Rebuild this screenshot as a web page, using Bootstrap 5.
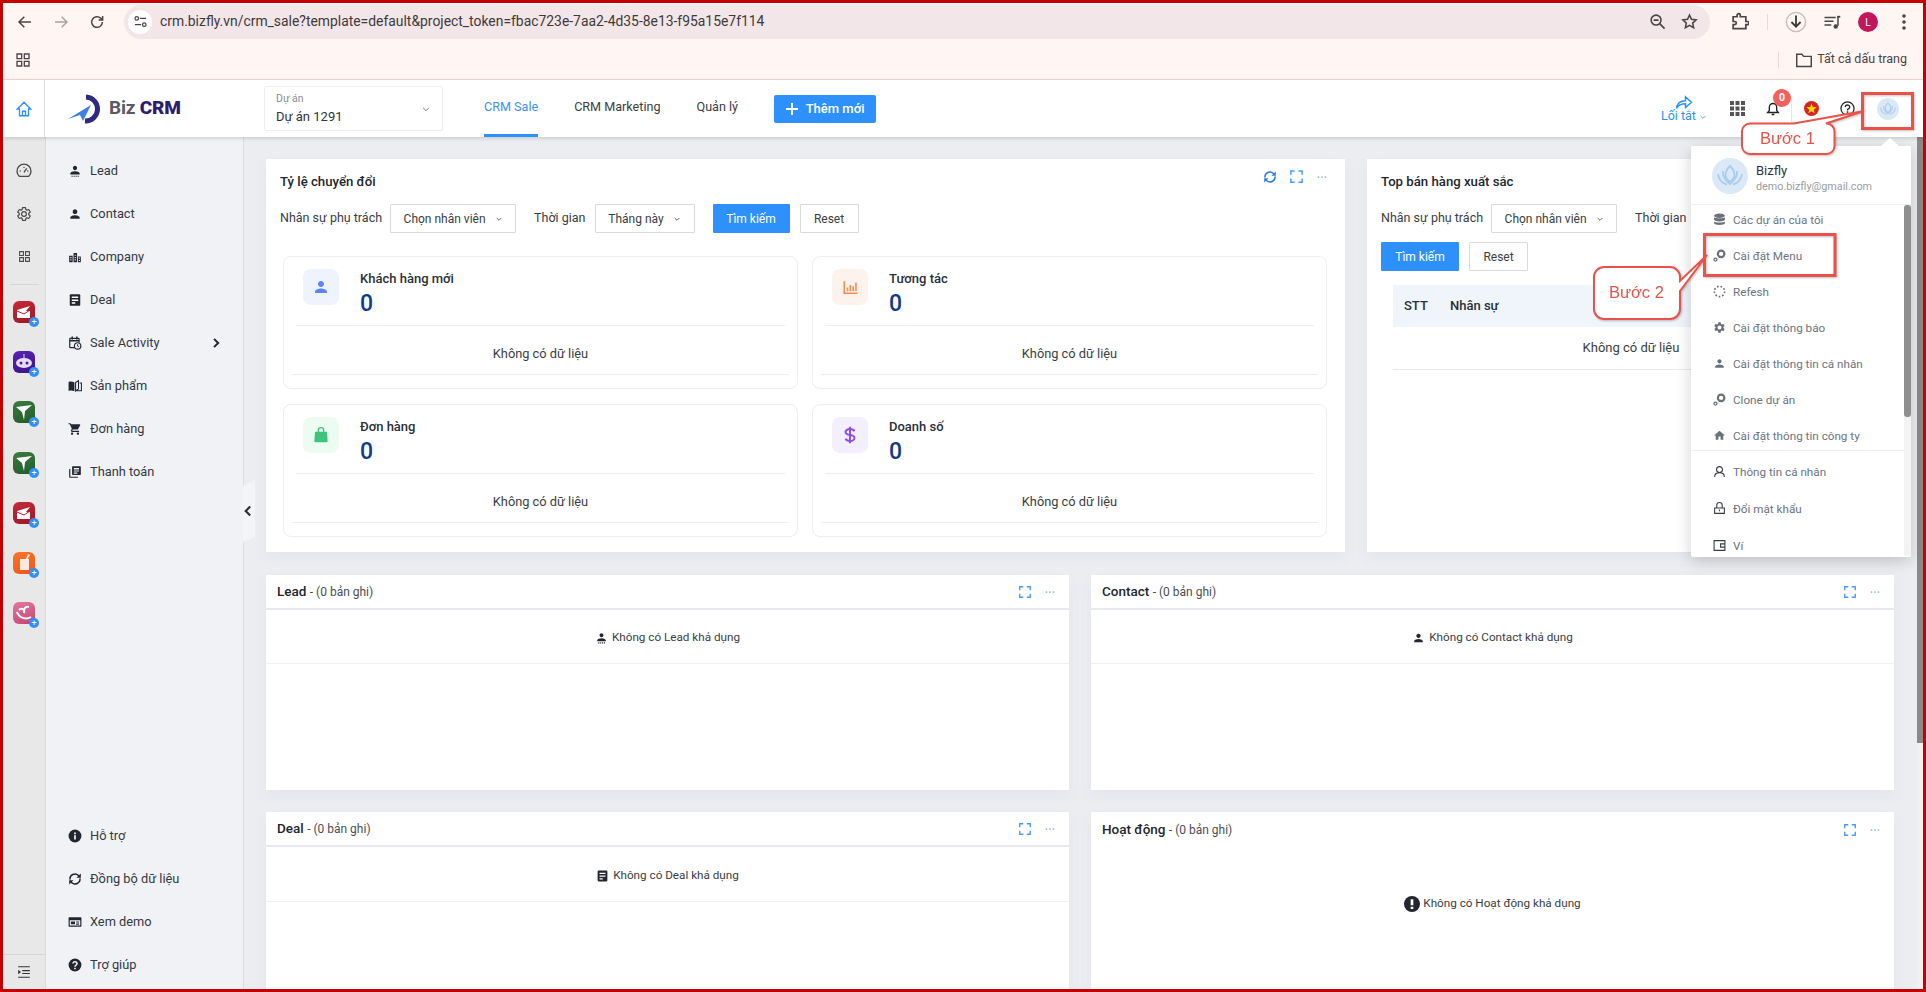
<!DOCTYPE html>
<html lang="vi">
<head>
<meta charset="UTF-8">
<title>CRM Sale</title>
<link href="https://cdn.jsdelivr.net/npm/bootstrap@5.3.0/dist/css/bootstrap.min.css" rel="stylesheet">
<style>
html, body { height: 100%; margin: 0; overflow: hidden; }
body { font-family: Roboto, "Liberation Sans", sans-serif; font-size: 13px; color: #2b2f38; background: #ecedf1; }
.shot { position: relative; width: 1926px; height: 992px; border: 3px solid #c40000; overflow: hidden; display: flex; flex-direction: column; }
.shot-layer { position: absolute; left: -3px; top: -3px; width: 1926px; height: 992px; pointer-events: none; z-index: 20; }

/* browser chrome */
.chrome-bar { height: 37px; background: #fff5f3; padding-left: 10px; gap: 12px; }
.chrome-btn { width: 24px; height: 24px; display: flex; align-items: center; justify-content: center; flex: none; }
.addr { height: 34px; width: 1586px; margin-left: 3px; background: #f2e6e8; border-radius: 17px; padding-left: 4px; font-size: 13.9px; color: #3f3a3c; flex: none; }
.addr-site { width: 24px; height: 24px; background: #fff; border-radius: 50%; margin-right: 8px; }
.addr-tools { gap: 15px; padding-right: 12px; }
.chrome-right { margin-left: 5px; gap: 12px; }
.book-bar { height: 40px; background: #fff5f3; border-bottom: 1px solid #f1dcdc; padding-left: 8px; font-size: 12.5px; color: #4a4446; }
.book-sep { width: 1px; height: 16px; background: #f7d3d6; }

/* app nav */
.app-nav { height: 57px; background: #fff; box-shadow: 0 1px 4px rgba(0,0,0,.18); position: relative; z-index: 5; flex: none; }
.home-cell { width: 42px; height: 100%; border-right: 1px solid #dcdde0; color: #2e90fa; }
.logo-box { width: 219px; padding-left: 22px; gap: 4px; }
.logo-txt { font-size: 19px; font-weight: 700; color: #5a5a66; letter-spacing: -.2px; white-space: nowrap; }
.logo-txt b { color: #2c1d6e; font-weight: 900; }
.proj-box { width: 179px; height: 45px; border: 1px solid #eeeff1; border-radius: 2px; padding: 4px 11px; margin-right: 41px; }
.proj-label { font-size: 10.5px; color: #8a8d94; line-height: 16px; }
.proj-name { font-size: 13px; color: #30333a; line-height: 20px; }
.tab-link { height: 57px; line-height: 53px; color: #3a3d44; font-size: 12.6px; margin-right: 36px; border-bottom: 3px solid transparent; text-decoration: none; }
.tab-link.on { color: #3d8ef8; border-bottom-color: #2e90fa; }
.add-btn { width: 102px; height: 28px; background: #2e90fa; color: #fff; font-size: 13px; font-weight: 500; border-radius: 2px; padding: 0; border: 0; }
.nav-right { padding-right: 17px; }
.short-cell { width: 60px; margin-right: 5px; color: #2e90fa; font-size: 12.5px; line-height: 14px; }
.nav-cell { width: 36px; height: 40px; display: flex; align-items: center; justify-content: center; position: relative; flex: none; }
.nav-cell.bell-cell { width: 35px; }
.nav-cell.me-cell { width: 37px; }
.nav-div { width: 1px; height: 26px; background: #e4e5e8; margin: 0 1px 0 1px; }
.bell-num { position: absolute; left: 18px; top: 0; width: 18px; height: 18px; line-height: 18px; border-radius: 50%; background: #f4605c; color: #fff; font-size: 10.5px; font-weight: 700; text-align: center; }

/* left columns */
.page-body { min-height: 0; }
.rail { width: 43px; background: #e8e8e8; border-right: 1px solid #dadada; flex: none; padding-top: 13px; }
.rail-row { height: 42.5px; color: #4a4a4a; }
.rail-line { height: 1px; background: #d6d6d6; margin: 6px 6px 2px 7px; }
.app-row { height: 50.3px; }
.app-ico { width: 22px; height: 22px; border-radius: 6px; position: relative; }
.app-red { background: linear-gradient(160deg, #c62a3a, #9c1626); }
.app-violet { background: linear-gradient(160deg, #5a22b0, #3a1488); }
.app-green { background: linear-gradient(160deg, #3a7d42, #235a2b); }
.app-orange { background: linear-gradient(160deg, #f9772a, #ef5418); }
.app-pink { background: linear-gradient(160deg, #e07a9c, #c44474); }
.app-plus { position: absolute; right: -4px; bottom: -4px; width: 10px; height: 10px; border-radius: 50%; background: #2e90fa; color: #fff; font-size: 9px; line-height: 10px; text-align: center; }
.rail-foot { height: 35px; border-top: 1px solid #d6d6d6; margin-top: auto; color: #333; }
.side { width: 198px; background: #f0f2f6; border-right: 1px solid #dcdde0; padding: 12.5px 0 2.5px 22px; flex: none; position: relative; }
.side-item { height: 43px; gap: 8px; color: #353844; font-size: 12.8px; text-decoration: none; padding-right: 22px; }
.side-ico { width: 14px; height: 14px; color: #23262e; flex: none; }
.side-tab { position: absolute; left: 197px; top: 343px; width: 12px; height: 62px; background: #f3f4f7; clip-path: polygon(0 6px, 100% 0, 100% 92%, 0 100%); }

/* main */
.main-area { flex: 1; padding: 22px 23px 0 22px; overflow: hidden; min-width: 0; }
.page-bar { width: 6px; background: #f1f1f1; flex: none; }
.page-thumb { height: 606px; background: #8a8a8a; }
.top-grid { display: grid; grid-template-columns: 1079px 527px; gap: 22px; height: 393px; margin-bottom: 23px; }
.half-grid { display: grid; grid-template-columns: 803px 803px; gap: 22px; height: 215px; margin-bottom: 22px; }
.pane { background: #fff; border: 0; border-radius: 0; box-shadow: 0 6px 14px rgba(90,90,140,.05); height: 100%; overflow: hidden; }
.pane-title { font-size: 13.2px; font-weight: 500; color: #23262e; }
.pane-head { height: 45px; padding: 0 17px 0 14px; }
.filter-row { height: 29px; padding-left: 14px; font-size: 12.5px; color: #3a3d44; }
.filter-row.second { margin-top: 9px; }
.filter-label { margin-left: 18px; }
.pick-btn { height: 29px; border: 1px solid #d9dadd; border-radius: 1px; background: #fff; color: #3a3d44; font-size: 12px; padding: 0; display: flex; align-items: center; justify-content: center; gap: 9px; flex: none; margin-left: 8px; width: 126px; }
.pick-btn.short { width: 100px; margin-left: 9px; }
.find-btn { width: 77px; height: 29px; background: #2e90fa; color: #fff; border: 0; border-radius: 1px; font-size: 12px; font-weight: 400; padding: 0; flex: none; margin-left: 18px; }
.filter-row.second .find-btn { width: 78px; margin-left: 0; }
.reset-btn { width: 59px; height: 29px; background: #fff; color: #3a3d44; border: 1px solid #d9dadd; border-radius: 1px; font-size: 12px; padding: 0; flex: none; margin-left: 10px; }
.stat-grid { display: grid; grid-template-columns: 515px 515px; gap: 15px 14px; padding: 23px 17px 0 17px; }
.stat-box { height: 133px; border: 1px solid #edeef0; border-radius: 8px; position: relative; }
.stat-top { height: 69px; margin: 0 12px; padding: 12px 0 0 7px; border-bottom: 1px solid #edeef0; gap: 21px; }
.stat-ico { width: 36px; height: 36px; border-radius: 8px; flex: none; }
.tone-blue { background: #eff3fe; color: #5b84f5; }
.tone-orange { background: #fef3ec; color: #f58a4b; }
.tone-green { background: #edfcf3; color: #3dc47e; }
.tone-violet { background: #f3effe; color: #8b4cf0; }
.stat-name { font-size: 13px; font-weight: 500; color: #2b2f38; line-height: 18px; margin-top: 1px; }
.stat-num { font-size: 23px; font-weight: 500; color: #0f3b8f; line-height: 32px; }
.stat-none { height: 49px; margin: 0 8px; padding-top: 18px; border-bottom: 1px solid #edeef0; color: #3a3d44; font-size: 12.8px; }
.rank-wrap { padding: 14px 25px 0 26px; }
.rank-table { margin: 0; font-size: 13px; }
.rank-table th { height: 42px; background: #f0f5fb; font-weight: 500; color: #2b2f38; vertical-align: middle; border: 0; padding: 0 0 0 11px; }
.rank-table th.rank-no { width: 46px; }
.rank-table td { height: 42px; text-align: center; vertical-align: middle; color: #3a3d44; border-bottom: 1px solid #e8e9ec; padding: 0; }
.box-head { height: 35px; padding: 0 13px 0 11px; font-size: 13.5px; font-weight: 500; color: #23262e; border-bottom: 2px solid #e8e9ec; }
.box-head.plain { border-bottom: 0; }
.box-head span { font-size: 12px; font-weight: 400; color: #4a4d55; }
.box-empty { height: 54px; padding-top: 3px; border-bottom: 1px solid #f0f0f2; font-size: 11.7px; color: #3a3d44; gap: 4px; }
.box-empty.deep { height: 55px; }
.act-empty { padding-top: 48px; font-size: 11.7px; color: #3a3d44; gap: 3px; }
.blue-tools { color: #4a9bf8; gap: 12px; }
.tools-high { margin-bottom: 10px; }
.tool-sync { color: #2f7fe0; }
.tool-dots { color: #7fa9dd; }
.empty-ico { color: #23262e; }

/* profile menu */
.pro-menu { display: block; position: absolute; left: 1691px; top: 146px; width: 220px; height: 411px; padding: 0; margin: 0; border: 0; border-radius: 2px; box-shadow: 0 4px 16px rgba(0,0,0,.18); z-index: 10; }
.pro-menu::before { content: ""; position: absolute; left: 190px; top: -8px; border: 9px solid transparent; border-top: 0; border-bottom: 8px solid #fff; }
.pro-head { height: 59px; padding: 12px 0 0 21px; gap: 8px; border-bottom: 1px solid #eeeff1; }
.pro-name { font-size: 13px; line-height: 18px; margin-top: 4px; color: #30333a; }
.pro-mail { font-size: 10.8px; line-height: 14px; color: #9a9ca3; }
.pro-body { height: 351px; }
.pro-list { flex: 1; overflow: hidden; }
.pro-item { height: 36px; padding: 7px 0 0 22px; gap: 7px; font-size: 11.7px; line-height: 16px; color: #6d7280; }
.pro-item.low { height: 37px; padding-top: 6px; }
.pro-item.tail { height: 29px; }
.pro-ico { width: 13px; height: 13px; color: #6b6f78; flex: none; margin-top: 1px; }
.pro-item.low .pro-ico { color: #3a3d44; }
.pro-gap { margin: 0 0 7px 0; border-color: #eeeff1; }
.pro-bar { width: 7px; background: #f3f3f3; border-radius: 0 0 3px 3px; }
.pro-thumb { height: 212px; background: #8f8f8f; border-radius: 3px; }
.note-txt { font-family: "Liberation Sans", sans-serif; font-size: 16.5px; fill: #e8524a; }
.note-art { filter: drop-shadow(1px 1px 1px rgba(0,0,0,.25)); z-index: 12; }
</style>
</head>
<body>
<svg width="0" height="0" class="position-absolute">
  <defs>
    <symbol id="i-user" viewBox="0 0 24 24"><path fill="currentColor" d="M12 12c2.210 0 4-1.790 4-4s-1.790-4-4-4-4 1.790-4 4 1.790 4 4 4zm0 2c-2.670 0-8 1.340-8 4v2h16v-2c0-2.660-5.330-4-8-4z"/></symbol>
    <symbol id="i-lead" viewBox="0 0 24 24"><path fill="currentColor" d="M12 10.500c2 0 3.600-1.600 3.600-3.700S14 3 12 3 8.400 4.700 8.400 6.800s1.600 3.700 3.600 3.700zm0 1.800c-2.700 0-8 1.300-8 3.800V18h16v-1.900c0-2.500-5.300-3.800-8-3.800z"/><path fill="currentColor" d="M6 20h2v2H6zM9.500 20h2v2h-2zM13 20h2v2h-2zM16.500 20h2v2h-2z"/></symbol>
    <symbol id="i-company" viewBox="0 0 24 24"><path fill="currentColor" d="M2 10h6v11H2zM9.500 5h6v16h-6zM17 11h5v10h-5z"/><path fill="#f0f2f6" d="M4 12h2v2H4zM4 16h2v2H4zM11.500 8h2v2h-2zM11.500 12h2v2h-2zM11.500 16h2v2h-2zM18.500 13h2v2h-2zM18.500 17h2v2h-2z"/></symbol>
    <symbol id="i-deal" viewBox="0 0 24 24"><path fill="currentColor" d="M5 2h14a2 2 0 0 1 2 2v16a2 2 0 0 1-2 2H5a2 2 0 0 1-2-2V4a2 2 0 0 1 2-2z"/><path fill="#fff" d="M6.500 6h11v2.500h-11zM6.500 11h11v2.500h-11zM6.500 16h6v2.500h-6z"/></symbol>
    <symbol id="i-cal" viewBox="0 0 24 24"><path fill="none" stroke="currentColor" stroke-width="2" d="M11 20H4a1 1 0 0 1-1-1V5a1 1 0 0 1 1-1h14a1 1 0 0 1 1 1v6"/><path fill="currentColor" d="M6 1h2.500v5H6zM14 1h2.500v5H14zM3 7h16v2.500H3z"/><circle cx="16.500" cy="17" r="5.500" fill="none" stroke="currentColor" stroke-width="2"/><path fill="none" stroke="currentColor" stroke-width="1.600" d="M16.500 14v3.300l2.200 1.200"/></symbol>
    <symbol id="i-book" viewBox="0 0 24 24"><path fill="currentColor" d="M1 5c3-1 7-1 10 1v15c-3-1.500-7-1.500-10-.5z"/><path fill="none" stroke="currentColor" stroke-width="1.800" d="M13 6l5-3v14l-5 3.500zM20 7h3v13h-8"/></symbol>
    <symbol id="i-cart" viewBox="0 0 24 24"><path fill="currentColor" d="M7 18c-1.100 0-1.990.9-1.990 2S5.900 22 7 22s2-.9 2-2-.9-2-2-2zM1 2v2h2l3.600 7.590-1.350 2.450c-.16.28-.25.61-.25.96 0 1.100.9 2 2 2h12v-2H7.420c-.14 0-.25-.11-.25-.25l.03-.12.9-1.630h7.450c.75 0 1.410-.41 1.750-1.030l3.580-6.490c.08-.14.12-.31.12-.48 0-.55-.45-1-1-1H5.210l-.94-2H1zm16 16c-1.100 0-1.990.9-1.990 2s.89 2 1.990 2 2-.9 2-2-.9-2-2-2z"/></symbol>
    <symbol id="i-paper" viewBox="0 0 24 24"><path fill="none" stroke="currentColor" stroke-width="2" d="M3 7v13a1 1 0 0 0 1 1h13"/><path fill="currentColor" d="M8 2h13a1 1 0 0 1 1 1v13a1 1 0 0 1-1 1H8a1 1 0 0 1-1-1V3a1 1 0 0 1 1-1z"/><path fill="#f0f2f6" d="M10 5h9v2.500h-9zM10 9.500h9v1.800h-9zM10 13h6v1.800h-6z"/></symbol>
    <symbol id="i-info" viewBox="0 0 24 24"><circle cx="12" cy="12" r="11" fill="currentColor"/><path fill="#f0f2f6" d="M10.500 10.500h3V18h-3zM10.500 6h3v3h-3z"/></symbol>
    <symbol id="i-help" viewBox="0 0 24 24"><circle cx="12" cy="12" r="11" fill="currentColor"/><path fill="none" stroke="#f0f2f6" stroke-width="2.600" d="M8.500 9.500a3.500 3.200 0 1 1 5.300 2.800c-1.300.7-1.800 1.300-1.800 2.700"/><path fill="#f0f2f6" d="M10.600 16.500h2.800v2.800h-2.800z"/></symbol>
    <symbol id="i-sync" viewBox="0 0 24 24"><path fill="none" stroke="currentColor" stroke-width="2.600" d="M3.500 13a8.500 8.500 0 0 1 14.500-7l2 2M20.500 11a8.500 8.500 0 0 1-14.500 7l-2-2"/><path fill="currentColor" d="M22 2.500v7.500h-7.500zM2 21.500V14h7.500z"/></symbol>
    <symbol id="i-demo" viewBox="0 0 24 24"><path fill="currentColor" d="M2 4h20a1 1 0 0 1 1 1v14a1 1 0 0 1-1 1H2a1 1 0 0 1-1-1V5a1 1 0 0 1 1-1zm1 5v9h18V9z"/><path fill="currentColor" d="M5 11h7v5H5zM14 11h5v2h-5zM14 14.500h5v2h-5z"/></symbol>
    <symbol id="i-gear" viewBox="0 0 24 24"><path d="M19.140 12.940c.04-.3.06-.61.06-.94 0-.32-.02-.64-.07-.94l2.030-1.580a.49.49 0 0 0 .12-.61l-1.920-3.320a.488.488 0 0 0-.59-.22l-2.390.96c-.5-.38-1.030-.7-1.620-.94l-.36-2.540a.484.484 0 0 0-.48-.41h-3.840c-.24 0-.43.17-.47.41l-.36 2.540c-.59.24-1.130.57-1.620.94l-2.390-.96c-.22-.08-.47 0-.59.22L2.740 8.870c-.12.21-.08.47.12.61l2.030 1.580c-.05.3-.09.63-.09.94s.02.64.07.94l-2.030 1.580a.49.49 0 0 0-.12.61l1.920 3.320c.12.22.37.29.59.22l2.390-.96c.5.38 1.030.7 1.620.94l.36 2.540c.05.24.24.41.48.41h3.840c.24 0 .44-.17.47-.41l.36-2.540c.59-.24 1.130-.56 1.620-.94l2.390.96c.22.08.47 0 .59-.22l1.920-3.320c.12-.22.07-.47-.12-.61l-2.010-1.580zM12 15.600c-1.980 0-3.600-1.620-3.600-3.600s1.620-3.600 3.600-3.600 3.600 1.620 3.600 3.600-1.620 3.600-3.600 3.600z"/></symbol>
    <symbol id="i-grid4" viewBox="0 0 24 24"><path fill="none" stroke="currentColor" stroke-width="2" d="M3 3h7v7H3zM14 3h7v7h-7zM3 14h7v7H3zM14 14h7v7h-7z"/></symbol>
    <symbol id="i-expand" viewBox="0 0 24 24"><path fill="none" stroke="currentColor" stroke-width="2.400" d="M3 9V3h6M15 3h6v6M21 15v6h-6M9 21H3v-6"/></symbol>
    <symbol id="i-dots" viewBox="0 0 24 24"><circle cx="5" cy="12" r="1.700" fill="currentColor"/><circle cx="12" cy="12" r="1.700" fill="currentColor"/><circle cx="19" cy="12" r="1.700" fill="currentColor"/></symbol>
    <symbol id="i-chev" viewBox="0 0 24 24"><path fill="none" stroke="currentColor" stroke-width="2.400" d="M5 9l7 7 7-7"/></symbol>
    <symbol id="i-lotus" viewBox="0 0 36 36"><circle cx="18" cy="18" r="18" fill="#dbe8f5"/><path fill="none" stroke="#a9cdf0" stroke-width="1.800" d="M18 8c3 3 4.500 6 4.500 9 0 2-1 4-4.500 7-3.500-3-4.500-5-4.500-7 0-3 1.500-6 4.500-9z"/><path fill="none" stroke="#a9cdf0" stroke-width="1.800" d="M11 13c-.5 4 2 9 7 13 5-4 7.500-9 7-13M6 16c.5 5 4 9.500 9 10.500M30 16c-.5 5-4 9.500-9 10.500"/></symbol>
    <symbol id="i-gears" viewBox="0 0 24 24"><circle cx="15" cy="9" r="6" fill="none" stroke="currentColor" stroke-width="4"/><circle cx="4.500" cy="19.500" r="2.800" fill="none" stroke="currentColor" stroke-width="2.400"/></symbol>
    <symbol id="i-db" viewBox="0 0 24 24"><ellipse cx="12" cy="5" rx="10" ry="4" fill="currentColor"/><path fill="currentColor" d="M2 8c2 2.500 18 2.500 20 0v4.500c-2 4-18 4-20 0zM2 15.500c2 2.500 18 2.500 20 0V19c-1 4-19 4-20 0z"/></symbol>
    <symbol id="i-home" viewBox="0 0 24 24"><path fill="currentColor" d="M10 20v-6h4v6h5v-8h3L12 3 2 12h3v8z"/></symbol>
  </defs>
</svg>

<div class="shot">
  <!-- browser toolbar -->
  <div class="chrome-bar d-flex align-items-center flex-shrink-0">
    <div class="chrome-btn"><svg width="16" height="16" viewBox="0 0 24 24"><path fill="none" stroke="#4b4547" stroke-width="2.200" d="M21 12H4M11 4l-8 8 8 8"/></svg></div>
    <div class="chrome-btn"><svg width="16" height="16" viewBox="0 0 24 24"><path fill="none" stroke="#aaa3a4" stroke-width="2.200" d="M3 12h17M13 4l8 8-8 8"/></svg></div>
    <div class="chrome-btn"><svg width="16" height="16" viewBox="0 0 24 24"><path fill="none" stroke="#4b4547" stroke-width="2.200" d="M20 12a8 8 0 1 1-2.500-5.800L20 8.500M20.500 3v6h-6"/></svg></div>
    <div class="addr d-flex align-items-center">
      <div class="addr-site d-flex align-items-center justify-content-center"><svg width="15" height="15" viewBox="0 0 24 24"><path fill="none" stroke="#4b4547" stroke-width="2" d="M11 7h10M3 17h10"/><circle cx="6" cy="7" r="2.800" fill="none" stroke="#4b4547" stroke-width="2"/><circle cx="18" cy="17" r="2.800" fill="none" stroke="#4b4547" stroke-width="2"/></svg></div>
      <span>crm.bizfly.vn/crm_sale?template=default&amp;project_token=fbac723e-7aa2-4d35-8e13-f95a15e7f114</span>
      <div class="addr-tools ms-auto d-flex align-items-center">
        <svg width="17" height="17" viewBox="0 0 24 24"><circle cx="10" cy="10" r="7" fill="none" stroke="#4b4547" stroke-width="2.200"/><path fill="none" stroke="#4b4547" stroke-width="2.400" d="M15 15l7 7M6.500 10h7"/></svg>
        <svg width="17" height="17" viewBox="0 0 24 24"><path fill="none" stroke="#4b4547" stroke-width="2.200" d="M12 3l2.800 6 6.500.8-4.800 4.400 1.300 6.500L12 17.500 6.200 20.700l1.300-6.500L2.700 9.800 9.200 9z"/></svg>
      </div>
    </div>
    <div class="chrome-right d-flex align-items-center">
      <div class="chrome-btn"><svg width="19" height="19" viewBox="0 0 24 24"><path fill="none" stroke="#4b4547" stroke-width="2.200" d="M4 6h5V4a2 2 0 0 1 4 0v2h7v6h2a2 2 0 0 1 0 4h-2v5H4v-5h2a2 2 0 0 0 0-4H4z"/></svg></div>
      <div class="book-sep mx-1"></div>
      <div class="chrome-btn"><svg width="22" height="22" viewBox="0 0 24 24"><circle cx="12" cy="12" r="10.500" fill="none" stroke="#c9bcbd" stroke-width="1.500"/><path fill="none" stroke="#3f3a3c" stroke-width="2" d="M12 5v12M7 12l5 5 5-5"/></svg></div>
      <div class="chrome-btn"><svg width="18" height="18" viewBox="0 0 24 24"><path fill="none" stroke="#4b4547" stroke-width="2" d="M2 6h15M2 11h12M2 16h9M20 4v13"/><circle cx="17" cy="18" r="3" fill="#4b4547"/><path fill="none" stroke="#4b4547" stroke-width="2.500" d="M19 5h4"/></svg></div>
      <div class="chrome-btn"><svg width="20" height="20" viewBox="0 0 20 20"><circle cx="10" cy="10" r="10" fill="#c2185b"/><text x="10" y="14" text-anchor="middle" fill="#fff" font-size="10" font-family="Roboto, sans-serif">L</text></svg></div>
      <div class="chrome-btn"><svg width="16" height="18" viewBox="0 0 16 18"><circle cx="8" cy="3" r="1.800" fill="#4b4547"/><circle cx="8" cy="9" r="1.800" fill="#4b4547"/><circle cx="8" cy="15" r="1.800" fill="#4b4547"/></svg></div>
    </div>
  </div>

  <!-- bookmarks -->
  <div class="book-bar d-flex align-items-center flex-shrink-0">
    <svg width="16" height="16" viewBox="0 0 24 24" class="ms-1"><use href="#i-grid4" color="#4b4547"/></svg>
    <div class="ms-auto d-flex align-items-center">
      <div class="book-sep me-3"></div>
      <svg width="18" height="16" viewBox="0 0 24 22"><path fill="none" stroke="#4b4547" stroke-width="2" d="M2 3h7l2.500 3H22v14H2z"/></svg>
      <span class="ms-1 me-3">Tất cả dấu trang</span>
    </div>
  </div>

  <!-- crm nav -->
  <div class="app-nav d-flex align-items-center">
    <div class="home-cell d-flex align-items-center justify-content-center flex-shrink-0">
      <svg width="18" height="18" viewBox="0 0 24 24"><path fill="none" stroke="currentColor" stroke-width="1.800" d="M12 3L3 12h3v9h12v-9h3zM10 21v-6h4v6"/></svg>
    </div>
    <div class="logo-box d-flex align-items-center flex-shrink-0">
      <svg width="38" height="30" viewBox="0 0 38 30"><path fill="none" stroke="#2f2a7f" stroke-width="5" d="M19 3a12 12 0 1 1-1 24"/><path fill="#3f7fe6" d="M1 25L24 11 16 27l-3-6z"/></svg>
      <div class="logo-txt">Biz <b>CRM</b></div>
    </div>
    <div class="proj-box d-flex align-items-center justify-content-between flex-shrink-0">
      <div><div class="proj-label">Dự án</div><div class="proj-name">Dự án 1291</div></div>
      <svg width="10" height="10" viewBox="0 0 24 24" color="#777"><use href="#i-chev"/></svg>
    </div>
    <a class="tab-link on" href="#">CRM Sale</a>
    <a class="tab-link" href="#">CRM Marketing</a>
    <a class="tab-link" href="#">Quản lý</a>
    <button class="btn add-btn d-flex align-items-center justify-content-center gap-2" type="button">
      <svg width="12" height="12" viewBox="0 0 12 12"><path fill="none" stroke="#fff" stroke-width="2" d="M6 0v12M0 6h12"/></svg>Thêm mới
    </button>
    <div class="nav-right ms-auto d-flex align-items-center">
      <div class="short-cell text-center flex-shrink-0">
        <svg width="18" height="15" viewBox="0 0 24 20" class="d-block mx-auto"><path fill="none" stroke="currentColor" stroke-width="2" d="M2 19c1-7 5-10 12-10V4l8 7-8 7v-5c-5 0-9 1-12 6z"/></svg>
        Lối tắt <svg width="8" height="8" viewBox="0 0 24 24"><use href="#i-chev"/></svg>
      </div>
      <div class="nav-cell"><svg width="15" height="15" viewBox="0 0 15 15" fill="#555"><path d="M0 0h4v4H0zM5.500 0h4v4h-4zM11 0h4v4h-4zM0 5.500h4v4H0zM5.500 5.500h4v4h-4zM11 5.500h4v4h-4zM0 11h4v4H0zM5.500 11h4v4h-4zM11 11h4v4h-4z"/></svg></div>
      <div class="nav-cell bell-cell">
        <svg width="16" height="17" viewBox="0 0 24 24"><path fill="none" stroke="#222" stroke-width="2" d="M4 18h16l-2.500-3V10a5.500 5.500 0 0 0-11 0v5zM10 21h4"/></svg>
        <span class="bell-num">0</span>
      </div>
      <div class="nav-div"></div>
      <div class="nav-cell"><svg width="15" height="15" viewBox="0 0 24 24"><circle cx="12" cy="12" r="12" fill="#d8231f"/><path fill="#ffde00" d="M12 4l2.200 5.600 6 .4-4.600 3.800 1.500 5.900L12 16.500l-5.100 3.200 1.500-5.900L3.800 10l6-.4z"/></svg></div>
      <div class="nav-cell"><svg width="15" height="15" viewBox="0 0 24 24"><circle cx="12" cy="12" r="10.500" fill="none" stroke="#222" stroke-width="2"/><path fill="none" stroke="#222" stroke-width="2.200" d="M8.500 9.500a3.500 3.200 0 1 1 5.300 2.800c-1.300.7-1.800 1.300-1.800 2.700"/><path fill="#222" d="M10.800 16.500h2.400v2.400h-2.400z"/></svg></div>
      <div class="nav-cell me-cell ms-1"><svg width="22" height="22"><use href="#i-lotus"/></svg></div>
    </div>
  </div>

  <!-- body -->
  <div class="page-body d-flex flex-grow-1 position-relative">
    <div class="rail d-flex flex-column">
      <div class="rail-row d-flex align-items-center justify-content-center flex-shrink-0">
        <svg width="16" height="16" viewBox="0 0 24 24"><path fill="none" stroke="currentColor" stroke-width="2" d="M5 20a10.500 10.500 0 1 1 14 0zM12 14l4-6M5.500 12h1.500M17 12h1.500M12 5.500V7"/></svg>
      </div>
      <div class="rail-row d-flex align-items-center justify-content-center flex-shrink-0">
        <svg width="16" height="16" viewBox="0 0 24 24"><use href="#i-gear" fill="none" stroke="currentColor" stroke-width="1.800"/></svg>
      </div>
      <div class="rail-row d-flex align-items-center justify-content-center flex-shrink-0">
        <svg width="13" height="13"><use href="#i-grid4"/></svg>
      </div>
      <div class="rail-line"></div>
      <div class="app-row d-flex align-items-center justify-content-center flex-shrink-0"><div class="app-ico app-red"><svg width="22" height="22" viewBox="0 0 22 22"><path fill="#fff" d="M4 9l13-4-4 5h4v7H4z"/><path fill="none" stroke="#b21d30" d="M4 10l7 3 6-4"/></svg><span class="app-plus">+</span></div></div>
      <div class="app-row d-flex align-items-center justify-content-center flex-shrink-0"><div class="app-ico app-violet"><svg width="22" height="22" viewBox="0 0 22 22"><ellipse cx="11" cy="12" rx="8" ry="5" fill="#e6dcf7"/><circle cx="8" cy="12" r="1.500" fill="#4a1a9e"/><circle cx="14" cy="12" r="1.500" fill="#4a1a9e"/><path stroke="#e6dcf7" d="M11 3v4"/></svg><span class="app-plus">+</span></div></div>
      <div class="app-row d-flex align-items-center justify-content-center flex-shrink-0"><div class="app-ico app-green"><svg width="22" height="22" viewBox="0 0 22 22"><path fill="#fff" d="M3 6l16-2-7 6-1 9-2-8z"/></svg><span class="app-plus">+</span></div></div>
      <div class="app-row d-flex align-items-center justify-content-center flex-shrink-0"><div class="app-ico app-green"><svg width="22" height="22" viewBox="0 0 22 22"><path fill="#fff" d="M3 6l16-2-7 6-1 9-2-8z"/></svg><span class="app-plus">+</span></div></div>
      <div class="app-row d-flex align-items-center justify-content-center flex-shrink-0"><div class="app-ico app-red"><svg width="22" height="22" viewBox="0 0 22 22"><path fill="#fff" d="M4 9l13-4-4 5h4v7H4z"/><path fill="none" stroke="#b21d30" d="M4 10l7 3 6-4"/></svg><span class="app-plus">+</span></div></div>
      <div class="app-row d-flex align-items-center justify-content-center flex-shrink-0"><div class="app-ico app-orange"><svg width="22" height="22" viewBox="0 0 22 22"><path fill="#ffe9dc" d="M7 7h9v11H7zM15 2l2 1-4 7-1-1z"/></svg><span class="app-plus">+</span></div></div>
      <div class="app-row d-flex align-items-center justify-content-center flex-shrink-0"><div class="app-ico app-pink"><svg width="22" height="22" viewBox="0 0 22 22"><path fill="none" stroke="#fff" stroke-width="2" d="M4 10c2 6 9 8 14 5M6 8c3-3 6 0 5 3M16 5c-3-1-5 1-5 4"/></svg><span class="app-plus">+</span></div></div>
      <div class="rail-foot d-flex align-items-center justify-content-center flex-shrink-0">
        <svg width="14" height="14" viewBox="0 0 24 24"><path fill="none" stroke="currentColor" stroke-width="2" d="M2 3h20M9 9.500h13M9 14.500h13M2 21h20"/><path fill="currentColor" d="M2 8l5 4-5 4z"/></svg>
      </div>
    </div>

    <div class="side d-flex flex-column">
      <a class="side-item d-flex align-items-center flex-shrink-0" href="#"><svg class="side-ico"><use href="#i-lead"/></svg>Lead</a>
      <a class="side-item d-flex align-items-center flex-shrink-0" href="#"><svg class="side-ico"><use href="#i-user"/></svg>Contact</a>
      <a class="side-item d-flex align-items-center flex-shrink-0" href="#"><svg class="side-ico"><use href="#i-company"/></svg>Company</a>
      <a class="side-item d-flex align-items-center flex-shrink-0" href="#"><svg class="side-ico"><use href="#i-deal"/></svg>Deal</a>
      <a class="side-item d-flex align-items-center flex-shrink-0" href="#"><svg class="side-ico"><use href="#i-cal"/></svg>Sale Activity<svg class="ms-auto" width="9" height="10" viewBox="0 0 10 12"><path fill="none" stroke="#23262e" stroke-width="2.400" d="M2 1l5 5-5 5"/></svg></a>
      <a class="side-item d-flex align-items-center flex-shrink-0" href="#"><svg class="side-ico"><use href="#i-book"/></svg>Sản phẩm</a>
      <a class="side-item d-flex align-items-center flex-shrink-0" href="#"><svg class="side-ico"><use href="#i-cart"/></svg>Đơn hàng</a>
      <a class="side-item d-flex align-items-center flex-shrink-0" href="#"><svg class="side-ico"><use href="#i-paper"/></svg>Thanh toán</a>
      <div class="mt-auto"></div>
      <a class="side-item d-flex align-items-center flex-shrink-0" href="#"><svg class="side-ico"><use href="#i-info"/></svg>Hỗ trợ</a>
      <a class="side-item d-flex align-items-center flex-shrink-0" href="#"><svg class="side-ico"><use href="#i-sync"/></svg>Đồng bộ dữ liệu</a>
      <a class="side-item d-flex align-items-center flex-shrink-0" href="#"><svg class="side-ico"><use href="#i-demo"/></svg>Xem demo</a>
      <a class="side-item d-flex align-items-center flex-shrink-0" href="#"><svg class="side-ico"><use href="#i-help"/></svg>Trợ giúp</a>
      <div class="side-tab d-flex align-items-center"><svg width="9" height="12" viewBox="0 0 10 12"><path fill="none" stroke="#2b2f38" stroke-width="2.400" d="M8 1L3 6l5 5"/></svg></div>
    </div>

    <div class="main-area">
      <div class="top-grid">
        <div class="card pane">
          <div class="pane-head d-flex align-items-center justify-content-between">
            <div class="pane-title">Tỷ lệ chuyển đổi</div>
            <div class="d-flex align-items-center blue-tools tools-high">
              <svg width="14" height="14" class="tool-sync"><use href="#i-sync"/></svg>
              <svg width="15" height="15"><use href="#i-expand"/></svg>
              <svg width="12" height="12" class="tool-dots"><use href="#i-dots"/></svg>
            </div>
          </div>
          <div class="filter-row d-flex align-items-center">
            <span>Nhân sự phụ trách</span>
            <button class="pick-btn" type="button">Chọn nhân viên <svg width="8" height="8"><use href="#i-chev"/></svg></button>
            <span class="filter-label">Thời gian</span>
            <button class="pick-btn short" type="button">Tháng này <svg width="8" height="8"><use href="#i-chev"/></svg></button>
            <button class="find-btn" type="button">Tìm kiếm</button>
            <button class="reset-btn" type="button">Reset</button>
          </div>
          <div class="stat-grid">
            <div class="stat-box">
              <div class="stat-top d-flex">
                <div class="stat-ico tone-blue d-flex align-items-center justify-content-center"><svg width="18" height="18"><use href="#i-user"/></svg></div>
                <div><div class="stat-name">Khách hàng mới</div><div class="stat-num">0</div></div>
              </div>
              <div class="stat-none text-center">Không có dữ liệu</div>
            </div>
            <div class="stat-box">
              <div class="stat-top d-flex">
                <div class="stat-ico tone-orange d-flex align-items-center justify-content-center"><svg width="15" height="15" viewBox="0 0 24 24"><path fill="none" stroke="currentColor" stroke-width="2.400" d="M2 2v19h21"/><path fill="currentColor" d="M6 12h2.500v6H6zM10.500 8h2.500v10h-2.500zM15 10h2.500v8H15zM19.500 4H22v14h-2.500z"/></svg></div>
                <div><div class="stat-name">Tương tác</div><div class="stat-num">0</div></div>
              </div>
              <div class="stat-none text-center">Không có dữ liệu</div>
            </div>
            <div class="stat-box">
              <div class="stat-top d-flex">
                <div class="stat-ico tone-green d-flex align-items-center justify-content-center"><svg width="16" height="18" viewBox="0 0 24 24"><path fill="currentColor" d="M4 7h16a1 1 0 0 1 1 1l1 13a2 2 0 0 1-2 2H4a2 2 0 0 1-2-2L3 8a1 1 0 0 1 1-1z"/><path fill="none" stroke="currentColor" stroke-width="2" d="M8 9V5a4 4 0 0 1 8 0v4"/></svg></div>
                <div><div class="stat-name">Đơn hàng</div><div class="stat-num">0</div></div>
              </div>
              <div class="stat-none text-center">Không có dữ liệu</div>
            </div>
            <div class="stat-box">
              <div class="stat-top d-flex">
                <div class="stat-ico tone-violet d-flex align-items-center justify-content-center"><svg width="14" height="18" viewBox="0 0 16 24"><path fill="none" stroke="currentColor" stroke-width="2.600" d="M14 7c-1-2-3-3-6-3S2 5.500 2 8s2.500 3.500 6 4 6 1.500 6 4-3 4-6 4-5-1-6-3M8 1v22"/></svg></div>
                <div><div class="stat-name">Doanh số</div><div class="stat-num">0</div></div>
              </div>
              <div class="stat-none text-center">Không có dữ liệu</div>
            </div>
          </div>
        </div>

        <div class="card pane">
          <div class="pane-head d-flex align-items-center"><div class="pane-title">Top bán hàng xuất sắc</div></div>
          <div class="filter-row d-flex align-items-center">
            <span>Nhân sự phụ trách</span>
            <button class="pick-btn" type="button">Chọn nhân viên <svg width="8" height="8"><use href="#i-chev"/></svg></button>
            <span class="filter-label">Thời gian</span>
          </div>
          <div class="filter-row second d-flex align-items-center">
            <button class="find-btn" type="button">Tìm kiếm</button>
            <button class="reset-btn" type="button">Reset</button>
          </div>
          <div class="rank-wrap">
            <table class="table rank-table">
              <thead><tr><th class="rank-no">STT</th><th>Nhân sự</th></tr></thead>
              <tbody><tr><td colspan="2">Không có dữ liệu</td></tr></tbody>
            </table>
          </div>
        </div>
      </div>

      <div class="half-grid">
        <div class="card pane">
          <div class="box-head d-flex align-items-center justify-content-between">
            <div>Lead <span>- (0 bản ghi)</span></div>
            <div class="d-flex align-items-center blue-tools"><svg width="14" height="14"><use href="#i-expand"/></svg><svg width="12" height="12" class="tool-dots"><use href="#i-dots"/></svg></div>
          </div>
          <div class="box-empty d-flex align-items-center justify-content-center"><svg width="13" height="14" class="empty-ico"><use href="#i-lead"/></svg>Không có Lead khả dụng</div>
        </div>
        <div class="card pane">
          <div class="box-head d-flex align-items-center justify-content-between">
            <div>Contact <span>- (0 bản ghi)</span></div>
            <div class="d-flex align-items-center blue-tools"><svg width="14" height="14"><use href="#i-expand"/></svg><svg width="12" height="12" class="tool-dots"><use href="#i-dots"/></svg></div>
          </div>
          <div class="box-empty d-flex align-items-center justify-content-center"><svg width="13" height="14" class="empty-ico"><use href="#i-user"/></svg>Không có Contact khả dụng</div>
        </div>
      </div>

      <div class="half-grid">
        <div class="card pane">
          <div class="box-head d-flex align-items-center justify-content-between">
            <div>Deal <span>- (0 bản ghi)</span></div>
            <div class="d-flex align-items-center blue-tools"><svg width="14" height="14"><use href="#i-expand"/></svg><svg width="12" height="12" class="tool-dots"><use href="#i-dots"/></svg></div>
          </div>
          <div class="box-empty deep d-flex align-items-center justify-content-center"><svg width="13" height="14" class="empty-ico"><use href="#i-deal"/></svg>Không có Deal khả dụng</div>
        </div>
        <div class="card pane">
          <div class="box-head plain d-flex align-items-center justify-content-between">
            <div>Hoạt động <span>- (0 bản ghi)</span></div>
            <div class="d-flex align-items-center blue-tools"><svg width="14" height="14"><use href="#i-expand"/></svg><svg width="12" height="12" class="tool-dots"><use href="#i-dots"/></svg></div>
          </div>
          <div class="act-empty d-flex align-items-center justify-content-center"><svg width="16" height="16" viewBox="0 0 24 24"><circle cx="12" cy="12" r="12" fill="#23262e"/><path fill="#fff" d="M10 5h4v9h-4zM10 16h4v3.500h-4z"/></svg>Không có Hoạt động khả dụng</div>
        </div>
      </div>
    </div>
    <div class="page-bar"><div class="page-thumb"></div></div>
  </div>

  <!-- things lying over the page -->
  <div class="shot-layer">
    <div class="dropdown-menu pro-menu">
      <div class="pro-head d-flex">
        <svg width="36" height="36" class="flex-shrink-0"><use href="#i-lotus"/></svg>
        <div><div class="pro-name">Bizfly</div><div class="pro-mail">demo.bizfly@gmail.com</div></div>
      </div>
      <div class="pro-body d-flex">
        <div class="pro-list">
          <div class="pro-item d-flex"><svg class="pro-ico"><use href="#i-db"/></svg>Các dự án của tôi</div>
          <div class="pro-item d-flex"><svg class="pro-ico"><use href="#i-gears"/></svg>Cài đặt Menu</div>
          <div class="pro-item d-flex"><svg class="pro-ico" viewBox="0 0 24 24"><circle cx="12" cy="12" r="9.500" fill="none" stroke="currentColor" stroke-width="3" stroke-dasharray="3 3.500"/></svg>Refesh</div>
          <div class="pro-item d-flex"><svg class="pro-ico"><use href="#i-gear" fill="currentColor"/></svg>Cài đặt thông báo</div>
          <div class="pro-item d-flex"><svg class="pro-ico"><use href="#i-user"/></svg>Cài đặt thông tin cá nhân</div>
          <div class="pro-item d-flex"><svg class="pro-ico"><use href="#i-gears"/></svg>Clone dự án</div>
          <div class="pro-item tail d-flex"><svg class="pro-ico"><use href="#i-home"/></svg>Cài đặt thông tin công ty</div>
          <hr class="dropdown-divider pro-gap">
          <div class="pro-item low d-flex"><svg class="pro-ico" viewBox="0 0 24 24"><path fill="none" stroke="currentColor" stroke-width="2" d="M12 3a5.500 5.500 0 1 1 0 11 5.500 5.500 0 0 1 0-11zM3 22c0-5 4-8 9-8s9 3 9 8"/></svg>Thông tin cá nhân</div>
          <div class="pro-item low d-flex"><svg class="pro-ico" viewBox="0 0 24 24"><path fill="none" stroke="currentColor" stroke-width="2" d="M3 11h18v10H3zM7 11V6a5 5 0 0 1 10 0v5M12 14v3"/></svg>Đổi mật khẩu</div>
          <div class="pro-item low d-flex"><svg class="pro-ico" viewBox="0 0 24 24"><path fill="none" stroke="currentColor" stroke-width="2" d="M2 3h20v18H2zM22 9h-8v6h8"/></svg>Ví</div>
        </div>
        <div class="pro-bar flex-shrink-0"><div class="pro-thumb"></div></div>
      </div>
    </div>

    <svg class="position-absolute top-0 start-0 note-art" width="1926" height="992">
      <rect x="1862.500" y="93.500" width="50" height="35" fill="none" stroke="#e8524a" stroke-width="3"/>
      <path d="M1750 123.500H1794L1864 111 1826 123.500A8 8 0 0 1 1834.500 131.500V146A8 8 0 0 1 1826.500 154H1750A8 8 0 0 1 1742 146V131.500A8 8 0 0 1 1750 123.500Z" fill="#fff" stroke="#e8524a" stroke-width="2"/>
      <text class="note-txt" x="1760" y="144">Bước 1</text>
      <rect x="1704.500" y="234.500" width="130.500" height="41" fill="none" stroke="#e8524a" stroke-width="3"/>
      <path d="M1604 267H1670A10 10 0 0 1 1680 277V281L1707 255 1680 291V309A10 10 0 0 1 1670 319H1604A10 10 0 0 1 1594 309V277A10 10 0 0 1 1604 267Z" fill="#fff" stroke="#e8524a" stroke-width="2"/>
      <text class="note-txt" x="1609" y="298">Bước 2</text>
    </svg>
  </div>
</div>
<script src="https://cdn.jsdelivr.net/npm/bootstrap@5.3.0/dist/js/bootstrap.bundle.min.js"></script>
</body>
</html>
